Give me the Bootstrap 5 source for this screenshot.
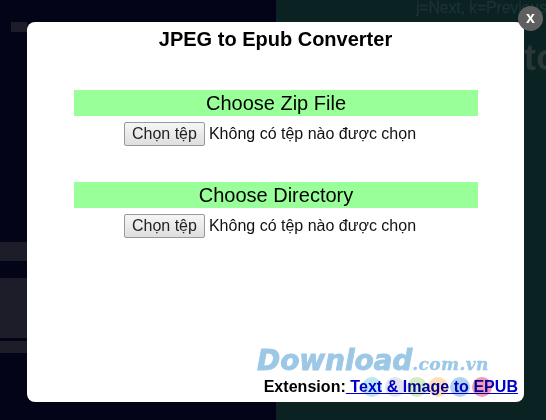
<!DOCTYPE html>
<html lang="vi">
<head>
<meta charset="utf-8">
<link href="https://cdn.jsdelivr.net/npm/bootstrap@5.3.0/dist/css/bootstrap.min.css" rel="stylesheet">
<style>
html,body{height:420px;overflow:hidden}
body{background:linear-gradient(90deg,#030418 0,#030418 276px,#0b2223 276px);font-family:"Liberation Sans",Arial,sans-serif;color:#000;position:relative;padding:22px 22px 18px 27px}
.bg-bar{position:absolute;background:#1c1d28}
.bar1{left:11px;top:22px;width:16px;height:10px}
.bar2{left:0;top:242px;width:27px;height:19px}
.bar3{left:0;top:278px;width:27px;height:60px}
.bar4{left:0;top:341px;width:27px;height:12px}
.bg-hint{position:absolute;left:416px;top:0;line-height:16px;font-size:16px;color:#1c3233;white-space:nowrap;letter-spacing:-.2px;-webkit-text-stroke:.3px #1c3233}
.bg-big{position:absolute;left:524px;top:38px;font-size:36px;font-weight:700;line-height:40px;color:#2a3637}
.sheet{height:380px;background:#fff;border-radius:8px;position:relative;padding:0 46px 0 47px}
.sheet-title{font-size:20px;font-weight:700;line-height:24px;padding:5px 1px 0 0;margin:0 0 39px;text-align:center}
.pick{margin-bottom:36px}
.pick-head{background:#99ff99;font-size:20px;line-height:26px;height:26px;text-align:center;font-weight:400;margin:0 0 6px}
.pick-row{height:24px;font-size:16px;line-height:24px;color:#111;padding-right:12px}
.fake-file{width:81px;height:24px;font:16px/20px "Liberation Sans",Arial,sans-serif;color:#222;border:1px solid #999;border-radius:2px;background:linear-gradient(#f6f6f6,#dedede);padding:0;margin-right:4px}
.close-x{position:absolute;left:491px;top:-16px;width:25px;height:25px;border-radius:50%;background:#5f5f5f;color:#fff;font-size:16px;font-weight:700;line-height:23px;text-align:center}
.ext{position:absolute;right:6px;bottom:5px;font-size:16px;font-weight:700;line-height:20px;white-space:nowrap;letter-spacing:.04px}
.ext a{color:#0000cc}
.mark-wm{position:absolute;left:230px;top:324px;font-family:"DejaVu Sans",sans-serif;font-style:italic;font-weight:700;color:#9cc8e6;white-space:nowrap;line-height:30px;font-size:28px;letter-spacing:-.1px;-webkit-text-stroke:.9px #9cc8e6}
.mark-wm span{font-family:"DejaVu Serif",serif;font-size:17px;letter-spacing:.4px;-webkit-text-stroke:.4px #9cc8e6}
.dot{position:absolute;bottom:5px;width:20px;height:20px;border-radius:50%;mix-blend-mode:multiply}
</style>
</head>
<body>
<div class="bg-bar bar1"></div><div class="bg-bar bar2"></div><div class="bg-bar bar3"></div><div class="bg-bar bar4"></div>
<div class="bg-hint">j=Next, k=Previous</div>
<div class="bg-big">to</div>
<main class="sheet">
  <h1 class="sheet-title">JPEG to Epub Converter</h1>
  <section class="pick">
    <h2 class="pick-head">Choose Zip File</h2>
    <div class="pick-row d-flex justify-content-center align-items-center"><button class="fake-file" type="button">Chọn tệp</button><span>Không có tệp nào được chọn</span></div>
  </section>
  <section class="pick">
    <h2 class="pick-head">Choose Directory</h2>
    <div class="pick-row d-flex justify-content-center align-items-center"><button class="fake-file" type="button">Chọn tệp</button><span>Không có tệp nào được chọn</span></div>
  </section>
  <div class="mark-wm">Download<span>.com.vn</span></div>
  <div class="ext">Extension:<a href="#">&nbsp;Text &amp; Image to EPUB</a></div>
  <i class="dot" style="left:335px;background:#bce5f8"></i>
  <i class="dot" style="left:358px;background:#e4e4f2"></i>
  <i class="dot" style="left:380px;background:#d4ecc0"></i>
  <i class="dot" style="left:401px;background:#fce0b8"></i>
  <i class="dot" style="left:423px;background:#aed2f0"></i>
  <i class="dot" style="left:445px;background:#f498b8"></i>
  <div class="close-x">x</div>
</main>
</body>
</html>
